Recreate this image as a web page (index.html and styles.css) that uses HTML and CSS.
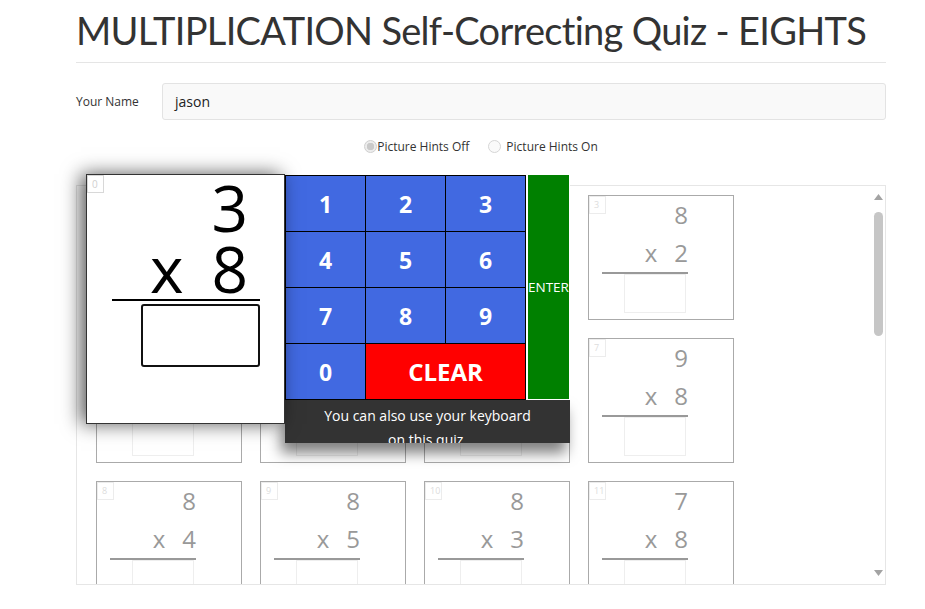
FILE: index.html
```html
<!DOCTYPE html>
<html>
<head>
<meta charset="utf-8">
<title>MULTIPLICATION Self-Correcting Quiz - EIGHTS</title>
<link rel="stylesheet" href="styles.css">
</head>
<body>
<div class="page">
  <h1 class="title">MULTIPLICATION Self-Correcting Quiz - EIGHTS</h1>
  <hr class="rule">
  <div class="name-row">
    <label class="name-label">Your Name</label>
    <div class="name-input">jason</div>
  </div>
  <div class="hints">
    <label class="hint"><input class="radio radio-on" type="radio" name="hints" checked disabled>Picture Hints Off</label>
    <label class="hint hint-second"><input class="radio" type="radio" name="hints" disabled>Picture Hints On</label>
  </div>
  <div class="quiz">
    <div class="scroller">
      <div class="grid">
        <div class="card"><span class="tag">0</span><div class="problem"><div>3</div><div><span class="x">x</span>8</div></div><div class="answer"></div></div>
        <div class="card"><span class="tag">1</span><div class="problem"><div>8</div><div><span class="x">x</span>6</div></div><div class="answer"></div></div>
        <div class="card"><span class="tag">2</span><div class="problem"><div>1</div><div><span class="x">x</span>8</div></div><div class="answer"></div></div>
        <div class="card"><span class="tag">3</span><div class="problem"><div>8</div><div><span class="x">x</span>2</div></div><div class="answer"></div></div>
        <div class="card"><span class="tag">4</span><div class="problem"><div>8</div><div><span class="x">x</span>9</div></div><div class="answer"></div></div>
        <div class="card"><span class="tag">5</span><div class="problem"><div>6</div><div><span class="x">x</span>8</div></div><div class="answer"></div></div>
        <div class="card"><span class="tag">6</span><div class="problem"><div>8</div><div><span class="x">x</span>7</div></div><div class="answer"></div></div>
        <div class="card"><span class="tag">7</span><div class="problem"><div>9</div><div><span class="x">x</span>8</div></div><div class="answer"></div></div>
        <div class="card"><span class="tag">8</span><div class="problem"><div>8</div><div><span class="x">x</span>4</div></div><div class="answer"></div></div>
        <div class="card"><span class="tag">9</span><div class="problem"><div>8</div><div><span class="x">x</span>5</div></div><div class="answer"></div></div>
        <div class="card"><span class="tag">10</span><div class="problem"><div>8</div><div><span class="x">x</span>3</div></div><div class="answer"></div></div>
        <div class="card"><span class="tag">11</span><div class="problem"><div>7</div><div><span class="x">x</span>8</div></div><div class="answer"></div></div>
        <div class="card"><span class="tag">12</span><div class="problem"><div>8</div><div><span class="x">x</span>8</div></div><div class="answer"></div></div>
        <div class="card"><span class="tag">13</span><div class="problem"><div>4</div><div><span class="x">x</span>8</div></div><div class="answer"></div></div>
        <div class="card"><span class="tag">14</span><div class="problem"><div>8</div><div><span class="x">x</span>1</div></div><div class="answer"></div></div>
        <div class="card"><span class="tag">15</span><div class="problem"><div>2</div><div><span class="x">x</span>8</div></div><div class="answer"></div></div>
      </div>
    </div>
    <div class="scrollbar">
      <svg class="arrow" width="9" height="6" viewBox="0 0 9 6"><polygon points="0,6 9,6 4.5,0" fill="#a3a3a3"/></svg>
      <div class="track"><div class="thumb"></div></div>
      <svg class="arrow" width="9" height="6" viewBox="0 0 9 6"><polygon points="0,0 9,0 4.5,6" fill="#a3a3a3"/></svg>
    </div>
    <div class="popup">
      <div class="card big-card"><span class="tag">0</span><div class="problem"><div>3</div><div><span class="x">x</span>8</div></div><div class="answer"></div></div>
      <div class="pad">
        <div class="pad-top">
          <div class="keys">
            <div class="key">1</div>
            <div class="key">2</div>
            <div class="key">3</div>
            <div class="key">4</div>
            <div class="key">5</div>
            <div class="key">6</div>
            <div class="key">7</div>
            <div class="key">8</div>
            <div class="key">9</div>
            <div class="key">0</div>
            <div class="key key-clear">CLEAR</div>
          </div>
          <div class="enter">ENTER</div>
        </div>
        <div class="pad-note">You can also use your keyboard<br>on this quiz.</div>
      </div>
    </div>
  </div>
</div>
</body>
</html>
```

FILE: styles.css
```css
* { box-sizing: border-box; }

body {
  margin: 0;
  font-family: "Open Sans", "Noto Sans", sans-serif;
  color: #333;
  background: #fff;
}

.page {
  width: 810px;
  margin-left: 76px;
}

.title {
  font-family: Lato, "Open Sans", sans-serif;
  font-weight: 400;
  font-size: 38px;
  letter-spacing: -0.7px;
  line-height: 47px;
  margin: 7px 0 0;
  color: #333;
  white-space: nowrap;
}

.rule {
  border: 0;
  border-top: 1px solid #e5e5e5;
  margin: 8px 0 0;
  height: 0;
}

.name-row {
  display: flex;
  align-items: center;
  margin-top: 20px;
}

.name-label {
  width: 86px;
  font-size: 12px;
  color: #333;
}

.name-input {
  flex: 1;
  height: 37px;
  border: 1px solid #e3e3e3;
  border-radius: 3px;
  background: #f9f9f9;
  padding-left: 12px;
  font-size: 14px;
  line-height: 35px;
  color: #222;
}

.hints {
  display: flex;
  justify-content: center;
  align-items: center;
  height: 18px;
  margin-top: 17px;
  font-size: 12px;
  color: #333;
}

.hint {
  display: flex;
  align-items: center;
}

.hint-second {
  margin-left: 19px;
}

.radio {
  appearance: none;
  -webkit-appearance: none;
  width: 13px;
  height: 13px;
  margin: 0;
  border: 1px solid #d6d6d6;
  border-radius: 50%;
  background: #fafafa;
}

.radio-on {
  background: radial-gradient(circle, #c9c9c9 0 3.5px, #ececec 4px);
  border-color: #cfcfcf;
}

.hint-second .radio {
  margin-right: 5px;
}

.quiz {
  position: relative;
  display: flex;
  margin-top: 30px;
  height: 400px;
  border: 1px solid #e6e6e6;
}

.scroller {
  flex: 1;
  height: 398px;
  overflow: hidden;
}

.scrollbar {
  width: 15px;
  display: flex;
  flex-direction: column;
  align-items: flex-start;
  padding: 8px 0 8px 4px;
}

.arrow {
  display: block;
  flex: none;
}

.track {
  flex: 1;
  padding-top: 12px;
}

.thumb {
  width: 9px;
  height: 124px;
  border-radius: 5px;
  background: #c6c6c6;
}

.grid {
  display: grid;
  grid-template-columns: repeat(4, 146px);
  gap: 18px;
  padding: 9px 0 12px 19px;
}

.card {
  position: relative;
  height: 125px;
  border: 1px solid #aaa;
  background: #fff;
}

.tag {
  position: absolute;
  left: 0;
  top: 0;
  width: 17px;
  height: 18px;
  border: 1px solid #ececec;
  font-size: 9px;
  line-height: 16px;
  padding-left: 4px;
  color: #ddd;
}

.problem {
  margin-left: 13px;
  width: 86px;
  font-size: 24px;
  line-height: 38px;
  text-align: right;
  color: #999;
  border-bottom: 2px solid #999;
}

.problem .x {
  margin-right: 17px;
}

.answer {
  margin-left: 35px;
  width: 62px;
  height: 39px;
  border: 1px solid #eee;
}

/* Popup (enlarged active card + keypad) */
.popup {
  position: absolute;
  left: 9px;
  top: -12px;
  display: flex;
  align-items: flex-start;
}

.big-card {
  width: 199px;
  height: 250px;
  border: 1px solid #333;
  padding-top: 2px;
  box-shadow: -5px 0 18px rgba(0, 0, 0, 0.65);
}

.big-card .tag {
  border-color: #d8d8d8;
  color: #d0d0d0;
  font-size: 10px;
}

.big-card .problem {
  margin-left: 25px;
  width: 148px;
  padding-right: 12px;
  font-size: 64px;
  line-height: 61px;
  color: #000;
  border-bottom: 2px solid #000;
}

.big-card .x {
  margin-right: 28px;
}

.big-card .answer {
  margin: 3px 0 0 54px;
  width: 119px;
  height: 63px;
  border: 2px solid #111;
  border-radius: 3px;
}

.pad {
  width: 285px;
  margin-top: 1px;
}

.pad-top {
  display: flex;
  background: #fff;
}

.keys {
  display: grid;
  grid-template-columns: repeat(3, 79px);
  grid-template-rows: repeat(4, 55px);
  gap: 1px;
  padding: 1px;
  background: #000;
  width: 241px;
}

.key {
  display: flex;
  align-items: center;
  justify-content: center;
  background: #4169e1;
  color: #fff;
  font-weight: 700;
  font-size: 23px;
}

.key-clear {
  grid-column: span 2;
  background: #ff0000;
  font-size: 24px;
}

.enter {
  width: 44px;
  height: 225px;
  margin-left: 1px;
  border: 1px solid #fff;
  border-top: 0;
  background: #008000;
  color: #fff;
  font-size: 13.5px;
  display: flex;
  align-items: center;
  overflow: hidden;
  white-space: nowrap;
}

.pad-note {
  height: 43px;
  overflow: hidden;
  padding-top: 4px;
  background: #333;
  color: #fff;
  font-size: 14px;
  line-height: 24px;
  text-align: center;
  box-shadow: -4px 10px 14px rgba(0, 0, 0, 0.5);
}
```
